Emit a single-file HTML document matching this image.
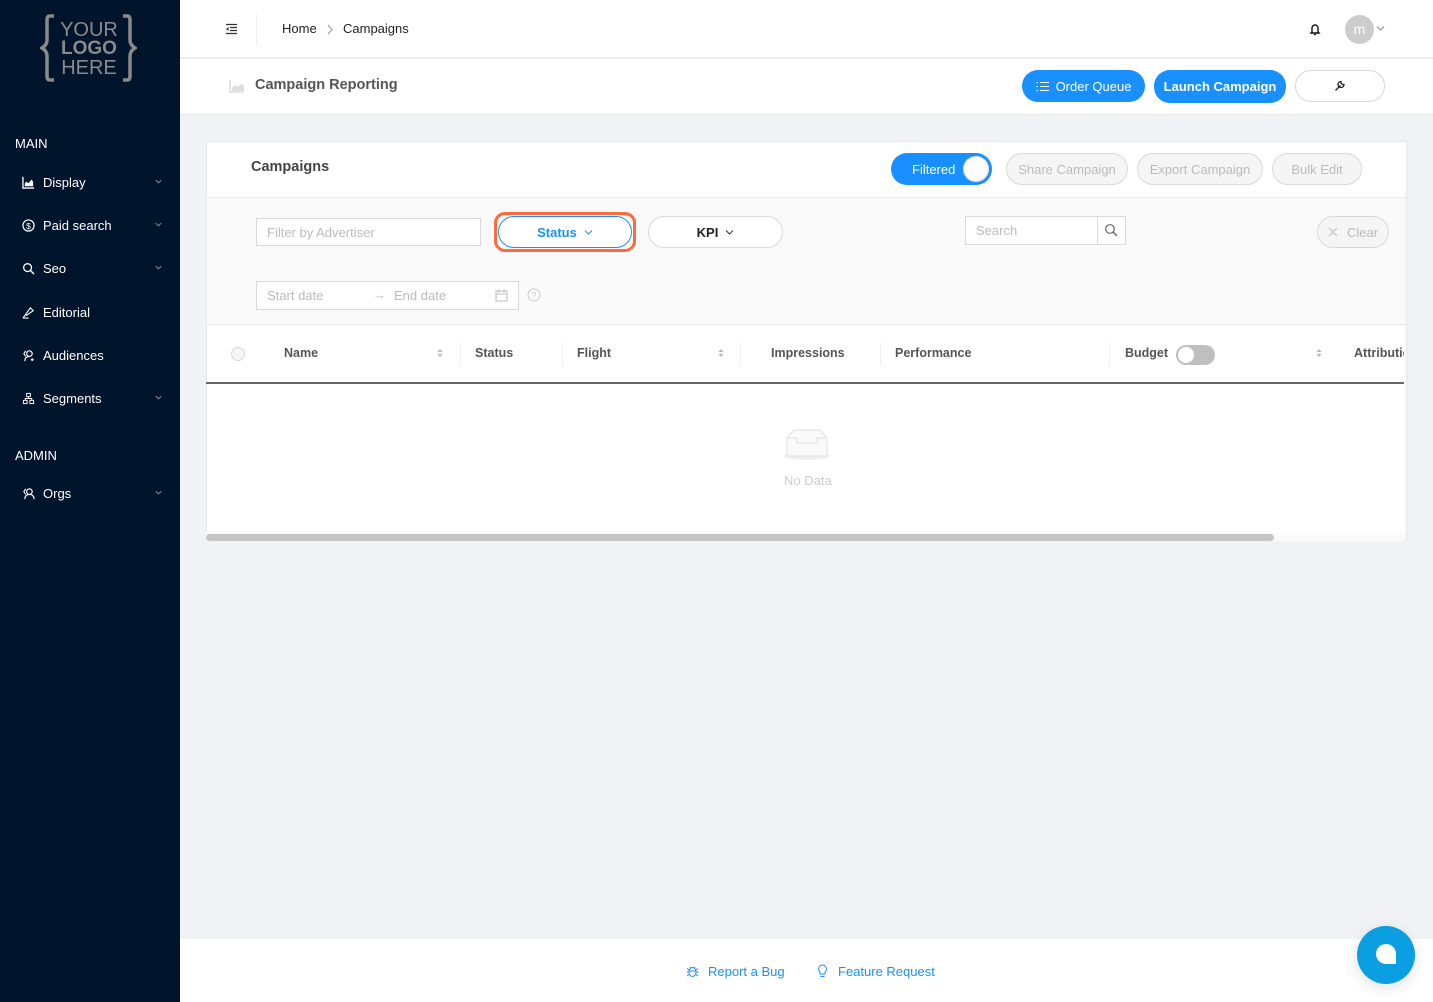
<!DOCTYPE html>
<html><head><meta charset="utf-8">
<style>
*{box-sizing:border-box;margin:0;padding:0}
body{width:1433px;height:1002px;position:relative;overflow:hidden;background:#f0f2f5;font-family:"Liberation Sans","DejaVu Sans",sans-serif;font-size:13px;color:#333}
.a{position:absolute}
.side{left:0;top:0;width:180px;height:1002px;background:#00152b}
.side .sec{position:absolute;left:15px;color:#fff;font-size:13px}
.side .it{position:absolute;left:22px;color:#fff;font-size:13px;display:flex;align-items:center;width:145px}
.side .it svg.i{width:13px;height:13px;margin-right:8px}
.side .it .ch{position:absolute;right:4px;top:2px}
.btn{position:absolute;border-radius:16px;display:flex;align-items:center;justify-content:center;font-size:13px}
.ghost{border:1px solid #d9d9d9;background:#f5f5f5;color:#bbb}
.th{position:absolute;top:346px;font-weight:bold;color:#555;font-size:12.5px}
.sep{position:absolute;top:343px;width:1px;height:22px;background:#eee}
.sort{position:absolute;top:347px;width:6px}
</style></head><body>

<div class="a side">
  <svg class="a" style="left:40px;top:14px" width="97" height="68" viewBox="0 0 97 68">
    <path d="M14 2h-4q-3 0-3 4v20q0 5-5 8q5 3 5 8v20q0 4 3 4h4" stroke="#8a8a8a" stroke-width="3.5" fill="none"/>
    <path d="M83 2h4q3 0 3 4v20q0 5 5 8q-5 3-5 8v20q0 4-3 4h-4" stroke="#8a8a8a" stroke-width="3.5" fill="none"/>
    <text x="49" y="22" font-size="20" fill="#8a8a8a" text-anchor="middle" font-family="Liberation Sans">YOUR</text>
    <text x="49" y="40" font-size="19" fill="#8a8a8a" text-anchor="middle" font-weight="bold" font-family="Liberation Sans">LOGO</text>
    <text x="49" y="60" font-size="20" fill="#8a8a8a" text-anchor="middle" font-family="Liberation Sans">HERE</text>
  </svg>
  <div class="sec" style="top:136px">MAIN</div>
  <div class="it" style="top:175px"><svg class="i" viewBox="0 0 14 14"><path d="M1 1v12h12" stroke="#fff" fill="none" stroke-width="1.4"/><path d="M3 11V8l2-2 2 2 3-4 2 2v5z" fill="#fff"/></svg>Display<svg class="ch" width="9" height="9" viewBox="0 0 10 10"><path d="M2 3.5l3 3 3-3" stroke="#8c96a3" fill="none"/></svg></div>
  <div class="it" style="top:218px"><svg class="i" viewBox="0 0 14 14"><circle cx="7" cy="7" r="6" stroke="#fff" fill="none" stroke-width="1.3"/><text x="7" y="10.5" font-size="9" fill="#fff" text-anchor="middle" font-family="Liberation Sans">$</text></svg>Paid search<svg class="ch" width="9" height="9" viewBox="0 0 10 10"><path d="M2 3.5l3 3 3-3" stroke="#8c96a3" fill="none"/></svg></div>
  <div class="it" style="top:261px"><svg class="i" viewBox="0 0 14 14"><circle cx="6" cy="6" r="4.2" stroke="#fff" fill="none" stroke-width="1.4"/><path d="M9 9l4 4" stroke="#fff" stroke-width="1.5"/></svg>Seo<svg class="ch" width="9" height="9" viewBox="0 0 10 10"><path d="M2 3.5l3 3 3-3" stroke="#8c96a3" fill="none"/></svg></div>
  <div class="it" style="top:305px"><svg class="i" viewBox="0 0 14 14"><path d="M4 9l5-7 3 3-7 5zM1 13l3-4M1 13h6" stroke="#fff" fill="none" stroke-width="1.2"/></svg>Editorial</div>
  <div class="it" style="top:348px"><svg class="i" viewBox="0 0 14 14"><circle cx="8" cy="5" r="3" stroke="#fff" fill="none" stroke-width="1.2"/><path d="M3 13c0-3 2-5 5-5M4 2l-2 3 2 3M11 10v3M9.5 11.5h3" stroke="#fff" fill="none" stroke-width="1.2"/></svg>Audiences</div>
  <div class="it" style="top:391px"><svg class="i" viewBox="0 0 14 14"><rect x="5" y="1.5" width="4" height="3.5" stroke="#fff" fill="none"/><rect x="1.5" y="9" width="4" height="3.5" stroke="#fff" fill="none"/><rect x="8.5" y="9" width="4" height="3.5" stroke="#fff" fill="none"/><path d="M7 5v2M3.5 9V7h7v2" stroke="#fff" fill="none"/></svg>Segments<svg class="ch" width="9" height="9" viewBox="0 0 10 10"><path d="M2 3.5l3 3 3-3" stroke="#8c96a3" fill="none"/></svg></div>
  <div class="sec" style="top:448px">ADMIN</div>
  <div class="it" style="top:486px"><svg class="i" viewBox="0 0 14 14"><circle cx="8" cy="5" r="3" stroke="#fff" fill="none" stroke-width="1.2"/><path d="M3 13c0-3 2-5 5-5s5 2 5 5M4 2l-2 3 2 3" stroke="#fff" fill="none" stroke-width="1.2"/></svg>Orgs<svg class="ch" width="9" height="9" viewBox="0 0 10 10"><path d="M2 3.5l3 3 3-3" stroke="#8c96a3" fill="none"/></svg></div>
</div>

<!-- header -->
<div class="a" style="left:180px;top:0;width:1253px;height:58px;background:#fff;border-bottom:1px solid #e8e8e8"></div>
<svg class="a" style="left:225px;top:23px" width="13" height="12" viewBox="0 0 13 12"><path d="M1 1.5h11M5 4.5h7M5 7.5h7M1 10.5h11" stroke="#333" stroke-width="1.2"/><path d="M3.5 4l-2.5 2 2.5 2z" fill="#333"/></svg>
<div class="a" style="left:256px;top:14px;width:1px;height:31px;background:#eee"></div>
<div class="a" style="left:282px;top:21px;color:#222">Home</div>
<svg class="a" style="left:326px;top:24px" width="8" height="11" viewBox="0 0 8 11"><path d="M2 1l4 4.5L2 10" stroke="#999" fill="none"/></svg>
<div class="a" style="left:343px;top:21px;color:#222">Campaigns</div>
<svg class="a" style="left:1309px;top:22px" width="12" height="14" viewBox="0 0 12 14"><path d="M3 10V6a3 3 0 016 0v4l1 1H2z" stroke="#111" fill="none" stroke-width="1.4"/><path d="M5 12.5h2" stroke="#111" stroke-width="1.4"/></svg>
<div class="a" style="left:1345px;top:15px;width:29px;height:29px;border-radius:50%;background:#ccc;color:#fff;text-align:center;line-height:28px;font-size:14px">m</div>
<svg class="a" style="left:1376px;top:25px" width="9" height="7" viewBox="0 0 9 7"><path d="M1 1.5l3.5 3.5 3.5-3.5" stroke="#888" fill="none"/></svg>

<!-- subheader -->
<div class="a" style="left:180px;top:59px;width:1253px;height:56px;background:#fff;border-bottom:1px solid #e8e8e8"></div>
<svg class="a" style="left:229px;top:79px" width="16" height="14" viewBox="0 0 16 14"><path d="M1 1v12h14" stroke="#ddd" fill="none" stroke-width="1.5"/><path d="M3 12V9l3-3 3 2 3-3 3 2v5z" fill="#ddd"/></svg>
<div class="a" style="left:255px;top:77px;font-size:14.5px;font-weight:bold;color:#555">Campaign Reporting</div>
<div class="btn" style="left:1022px;top:70px;width:123px;height:32px;background:#1890ff;color:#fff"><svg width="13" height="11" viewBox="0 0 13 11" style="margin-right:7px"><path d="M4 1.5h9M4 5.5h9M4 9.5h9" stroke="#fff"/><path d="M0.5 1.5h1.5M0.5 5.5h1.5M0.5 9.5h1.5" stroke="#fff"/></svg>Order Queue</div>
<div class="btn" style="left:1154px;top:70px;width:132px;height:33px;background:#1890ff;color:#fff;font-weight:bold">Launch Campaign</div>
<div class="btn" style="left:1295px;top:70px;width:90px;height:32px;border:1px solid #d9d9d9;background:#fff"><svg width="12" height="12" viewBox="0 0 12 12"><path d="M1.5 10.5l5-5M7 1.5a3 3 0 103 3l-1.5 0-1.5-1.5z" stroke="#222" fill="none" stroke-width="1.3"/></svg></div>

<!-- card -->
<div class="a" style="left:206px;top:141px;width:1201px;height:400px;background:#fff;border:1px solid #e8e8e8"></div>
<div class="a" style="left:251px;top:159px;font-size:14.5px;font-weight:bold;color:#444">Campaigns</div>
<div class="btn" style="left:891px;top:153px;width:101px;height:32px;background:#1890ff;color:#fff;justify-content:flex-start;padding-left:21px">Filtered<div class="a" style="right:3px;top:3px;width:26px;height:26px;border-radius:50%;background:#fff;box-shadow:inset 0 0 2px #aaa"></div></div>
<div class="btn ghost" style="left:1006px;top:153px;width:122px;height:32px">Share Campaign</div>
<div class="btn ghost" style="left:1137px;top:153px;width:126px;height:32px">Export Campaign</div>
<div class="btn ghost" style="left:1272px;top:153px;width:90px;height:32px">Bulk Edit</div>
<div class="a" style="left:207px;top:197px;width:1199px;height:128px;background:#fafafa;border-top:1px solid #e8e8e8;border-bottom:1px solid #e8e8e8"></div>
<div class="a" style="left:256px;top:218px;width:225px;height:28px;border:1px solid #d9d9d9;background:#fff;color:#bbb;padding:6px 10px">Filter by Advertiser</div>
<div class="a" style="left:494px;top:212px;width:142px;height:40px;border:3px solid #ff6a3d;border-radius:11px"></div>
<div class="btn" style="left:498px;top:216px;width:134px;height:32px;border:1px solid #1890ff;background:#fff;color:#1890ff;font-weight:bold">Status <svg width="9" height="7" viewBox="0 0 9 7" style="margin-left:7px"><path d="M1 1.5l3.5 3.5 3.5-3.5" stroke="#1890ff" fill="none"/></svg></div>
<div class="btn" style="left:648px;top:216px;width:135px;height:32px;border:1px solid #d9d9d9;background:#fff;color:#222;font-weight:bold">KPI <svg width="9" height="7" viewBox="0 0 9 7" style="margin-left:7px"><path d="M1 1.5l3.5 3.5 3.5-3.5" stroke="#333" fill="none"/></svg></div>
<div class="a" style="left:965px;top:216px;width:161px;height:29px;border:1px solid #d9d9d9;background:#fff;color:#bbb;padding:6px 10px">Search</div>
<div class="a" style="left:1097px;top:217px;width:1px;height:27px;background:#d9d9d9"></div>
<svg class="a" style="left:1104px;top:223px" width="14" height="14" viewBox="0 0 14 14"><circle cx="6" cy="6" r="4.3" stroke="#666" fill="none" stroke-width="1.2"/><path d="M9 9l4 4" stroke="#666" stroke-width="1.3"/></svg>
<div class="btn ghost" style="left:1317px;top:216px;width:72px;height:32px;color:#bbb"><svg width="10" height="10" viewBox="0 0 10 10" style="margin-right:9px"><path d="M1 1l8 8M9 1L1 9" stroke="#bbb"/></svg>Clear</div>
<div class="a" style="left:256px;top:281px;width:263px;height:29px;border:1px solid #d9d9d9;background:#fff;color:#bbb"><span class="a" style="left:10px;top:6px">Start date</span><span class="a" style="left:116px;top:5px">→</span><span class="a" style="left:137px;top:6px">End date</span><svg class="a" style="left:238px;top:7px" width="13" height="13" viewBox="0 0 13 13"><rect x="1" y="2" width="11" height="10" stroke="#bbb" fill="none"/><path d="M1 5h11M4 0.5v3M9 0.5v3" stroke="#bbb"/></svg></div>
<svg class="a" style="left:527px;top:288px" width="14" height="14" viewBox="0 0 14 14"><circle cx="7" cy="7" r="6" stroke="#ccc" fill="none"/><text x="7" y="10.5" font-size="9" fill="#ccc" text-anchor="middle" font-family="Liberation Sans">?</text></svg>

<!-- table head -->
<div class="a" style="left:231px;top:347px;width:14px;height:14px;border-radius:50%;border:1px solid #d9d9d9;background:#f5f5f5"></div>
<div class="th" style="left:284px">Name</div>
<svg class="sort" style="left:437px" width="7" height="12" viewBox="0 0 7 12"><path d="M0.5 5l3-4 3 4zM0.5 7l3 4 3-4z" fill="#bbb"/></svg>
<div class="sep" style="left:460px"></div>
<div class="th" style="left:475px">Status</div>
<div class="sep" style="left:562px"></div>
<div class="th" style="left:577px">Flight</div>
<svg class="sort" style="left:718px" width="7" height="12" viewBox="0 0 7 12"><path d="M0.5 5l3-4 3 4zM0.5 7l3 4 3-4z" fill="#bbb"/></svg>
<div class="sep" style="left:740px"></div>
<div class="th" style="left:771px">Impressions</div>
<div class="sep" style="left:880px"></div>
<div class="th" style="left:895px">Performance</div>
<div class="sep" style="left:1109px"></div>
<div class="th" style="left:1125px">Budget</div>
<div class="a" style="left:1176px;top:345px;width:39px;height:20px;border-radius:10px;background:#bfbfbf"><div class="a" style="left:2px;top:2px;width:16px;height:16px;border-radius:50%;background:#fff"></div></div>
<svg class="sort" style="left:1316px" width="7" height="12" viewBox="0 0 7 12"><path d="M0.5 5l3-4 3 4zM0.5 7l3 4 3-4z" fill="#bbb"/></svg>
<div class="th" style="left:1354px;width:53px;overflow:hidden;white-space:nowrap">Attribution</div>
<div class="a" style="left:206px;top:382px;width:1201px;height:2px;background:#666"></div>
<div class="a" style="left:1404px;top:325px;width:4px;height:215px;background:linear-gradient(to right,#fff,#e8e8e8)"></div>

<!-- empty -->
<svg class="a" style="left:777px;top:424px" width="60" height="40" viewBox="0 0 60 40"><ellipse cx="30" cy="32" rx="23" ry="4" fill="#f0f0f0"/><path d="M10 14l7-8h26l7 8v18H10z" fill="#fafafa" stroke="#e0e0e0"/><path d="M10 14h10v5h20v-5h10" fill="none" stroke="#e0e0e0"/></svg>
<div class="a" style="left:784px;top:473px;color:#ccc">No Data</div>
<div class="a" style="left:206px;top:533px;width:1199px;height:8px;background:#fafafa"></div>
<div class="a" style="left:206px;top:534px;width:1068px;height:7px;border-radius:4px;background:#c4c4c4"></div>

<!-- footer -->
<div class="a" style="left:180px;top:939px;width:1253px;height:63px;background:#fff"></div>
<svg class="a" style="left:686px;top:964px" width="13" height="14" viewBox="0 0 13 14"><ellipse cx="6.5" cy="8" rx="3.5" ry="4.5" stroke="#1890ff" fill="none"/><path d="M4 3l1 1.5M9 3L8 4.5M0.5 8H3M10 8h2.5M1 4.5l2 1.5M12 4.5l-2 1.5M1 12l2-1.5M12 12l-2-1.5M3 7h7" stroke="#1890ff" fill="none"/></svg>
<div class="a" style="left:708px;top:964px;color:#1890ff">Report a Bug</div>
<svg class="a" style="left:817px;top:964px" width="11" height="14" viewBox="0 0 11 14"><path d="M5.5 1a4 4 0 00-2.5 7v2h5V8a4 4 0 00-2.5-7zM3.5 12.5h4" stroke="#1890ff" fill="none"/></svg>
<div class="a" style="left:838px;top:964px;color:#1890ff">Feature Request</div>
<div class="a" style="left:1357px;top:926px;width:58px;height:58px;border-radius:50%;background:#0b9ee0;box-shadow:0 4px 14px rgba(0,0,0,.12)"></div>
<svg class="a" style="left:1375px;top:943px" width="22" height="22" viewBox="0 0 22 22"><path d="M11 1a10 10 0 00-10 10 10 10 0 0010 10h10V11A10 10 0 0011 1z" fill="#fff"/></svg>
</body></html>
